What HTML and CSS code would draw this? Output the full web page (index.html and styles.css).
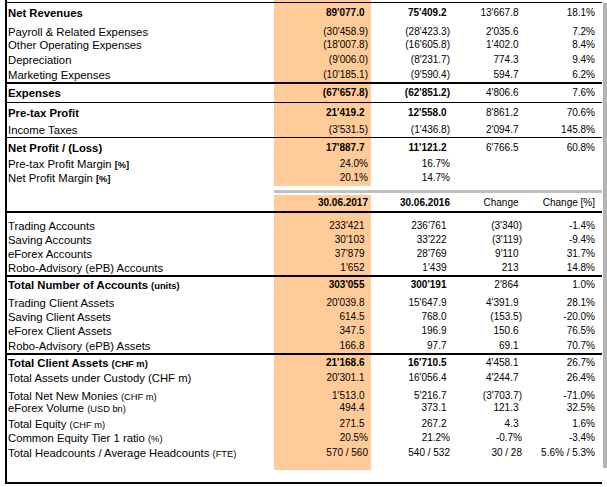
FILE: index.html
```html
<!DOCTYPE html>
<html>
<head>
<meta charset="utf-8">
<link rel="stylesheet" href="styles.css">
</head>
<body>
<div class="page">
  <div class="sheet">
    <div class="row cut"><div></div><div class="c1"></div><div></div><div></div><div></div><div></div></div>

    <div class="row h22 pt3 bold"><div class="lbl">Net Revenues</div><div class="c1 p">89'077.0</div><div class="c2 p">75'409.2</div><div class="c3 p nb">13'667.8</div><div class="c4 nb">18.1%</div><div></div></div>
    <div class="row h13"><div class="lbl">Payroll &amp; Related Expenses</div><div class="c1">(30'458.9)</div><div class="c2">(28'423.3)</div><div class="c3 p">2'035.6</div><div class="c4">7.2%</div><div></div></div>
    <div class="row h15"><div class="lbl">Other Operating Expenses</div><div class="c1">(18'007.8)</div><div class="c2">(16'605.8)</div><div class="c3 p">1'402.0</div><div class="c4">8.4%</div><div></div></div>
    <div class="row h15"><div class="lbl">Depreciation</div><div class="c1">(9'006.0)</div><div class="c2">(8'231.7)</div><div class="c3 p">774.3</div><div class="c4">9.4%</div><div></div></div>
    <div class="row h16 bb2"><div class="lbl">Marketing Expenses</div><div class="c1">(10'185.1)</div><div class="c2">(9'590.4)</div><div class="c3 p">594.7</div><div class="c4">6.2%</div><div></div></div>
    <div class="row h19 pt2 bb1 bold"><div class="lbl">Expenses</div><div class="c1">(67'657.8)</div><div class="c2">(62'851.2)</div><div class="c3 p nb">4'806.6</div><div class="c4 nb">7.6%</div><div></div></div>
    <div class="row h20 pt3 bold"><div class="lbl">Pre-tax Profit</div><div class="c1 p">21'419.2</div><div class="c2 p">12'558.0</div><div class="c3 p nb">8'861.2</div><div class="c4 nb">70.6%</div><div></div></div>
    <div class="row h15 bb1"><div class="lbl">Income Taxes</div><div class="c1">(3'531.5)</div><div class="c2">(1'436.8)</div><div class="c3 p">2'094.7</div><div class="c4">145.8%</div><div></div></div>
    <div class="row h19 pt3 bold"><div class="lbl">Net Profit / (Loss)</div><div class="c1 p">17'887.7</div><div class="c2 p">11'121.2</div><div class="c3 p nb">6'766.5</div><div class="c4 nb">60.8%</div><div></div></div>
    <div class="row h14"><div class="lbl">Pre-tax Profit Margin <span class="unit b">[%]</span></div><div class="c1">24.0%</div><div class="c2">16.7%</div><div class="c3"></div><div class="c4"></div><div></div></div>
    <div class="row h14"><div class="lbl">Net Profit Margin <span class="unit b">[%]</span></div><div class="c1">20.1%</div><div class="c2">14.7%</div><div class="c3"></div><div class="c4"></div><div></div></div>

    <div class="gap5"></div>
    <div class="band"></div>
    <div class="gap2"></div>

    <div class="row h18 pt1 bb2 bold"><div class="lbl"></div><div class="c1">30.06.2017</div><div class="c2">30.06.2016</div><div class="c3 p nb">Change</div><div class="c4 nb">Change [%]</div><div></div></div>
    <div class="row h20 pt6"><div class="lbl">Trading Accounts</div><div class="c1 p">233'421</div><div class="c2 p">236'761</div><div class="c3">(3'340)</div><div class="c4">-1.4%</div><div></div></div>
    <div class="row h14"><div class="lbl">Saving Accounts</div><div class="c1 p">30'103</div><div class="c2 p">33'222</div><div class="c3">(3'119)</div><div class="c4">-9.4%</div><div></div></div>
    <div class="row h14"><div class="lbl">eForex Accounts</div><div class="c1 p">37'879</div><div class="c2 p">28'769</div><div class="c3 p">9'110</div><div class="c4">31.7%</div><div></div></div>
    <div class="row h16 bb2"><div class="lbl">Robo-Advisory (ePB) Accounts</div><div class="c1 p">1'652</div><div class="c2 p">1'439</div><div class="c3 p">213</div><div class="c4">14.8%</div><div></div></div>
    <div class="row h19 pt1 bold"><div class="lbl">Total Number of Accounts <span class="unit">(units)</span></div><div class="c1 p">303'055</div><div class="c2 p">300'191</div><div class="c3 p nb">2'864</div><div class="c4 nb">1.0%</div><div></div></div>
    <div class="row h14"><div class="lbl">Trading Client Assets</div><div class="c1 p">20'039.8</div><div class="c2 p">15'647.9</div><div class="c3 p">4'391.9</div><div class="c4">28.1%</div><div></div></div>
    <div class="row h14"><div class="lbl">Saving Client Assets</div><div class="c1 p">614.5</div><div class="c2 p">768.0</div><div class="c3">(153.5)</div><div class="c4">-20.0%</div><div></div></div>
    <div class="row h15"><div class="lbl">eForex Client Assets</div><div class="c1 p">347.5</div><div class="c2 p">196.9</div><div class="c3 p">150.6</div><div class="c4">76.5%</div><div></div></div>
    <div class="row h16 bb2"><div class="lbl">Robo-Advisory (ePB) Assets</div><div class="c1 p">166.8</div><div class="c2 p">97.7</div><div class="c3 p">69.1</div><div class="c4">70.7%</div><div></div></div>
    <div class="row h16 pt1 bold"><div class="lbl">Total Client Assets <span class="unit">(CHF m)</span></div><div class="c1 p">21'168.6</div><div class="c2 p">16'710.5</div><div class="c3 p nb">4'458.1</div><div class="c4 nb">26.7%</div><div></div></div>
    <div class="row h18"><div class="lbl">Total Assets under Custody (CHF m)</div><div class="c1 p">20'301.1</div><div class="c2 p">16'056.4</div><div class="c3 p">4'244.7</div><div class="c4">26.4%</div><div></div></div>
    <div class="row h12"><div class="lbl">Total Net New Monies <span class="unit">(CHF m)</span></div><div class="c1 p">1'513.0</div><div class="c2 p">5'216.7</div><div class="c3">(3'703.7)</div><div class="c4">-71.0%</div><div></div></div>
    <div class="row h16"><div class="lbl">eForex Volume <span class="unit">(USD bn)</span></div><div class="c1 p">494.4</div><div class="c2 p">373.1</div><div class="c3 p">121.3</div><div class="c4">32.5%</div><div></div></div>
    <div class="row h14"><div class="lbl">Total Equity <span class="unit">(CHF m)</span></div><div class="c1 p">271.5</div><div class="c2 p">267.2</div><div class="c3 p">4.3</div><div class="c4">1.6%</div><div></div></div>
    <div class="row h15"><div class="lbl">Common Equity Tier 1 ratio <span class="unit">(%)</span></div><div class="c1">20.5%</div><div class="c2">21.2%</div><div class="c3">-0.7%</div><div class="c4">-3.4%</div><div></div></div>
    <div class="row h24"><div class="lbl">Total Headcounts / Average Headcounts <span class="unit">(FTE)</span></div><div class="c1">570 / 560</div><div class="c2">540 / 532</div><div class="c3">30 / 28</div><div class="c4">5.6% / 5.3%</div><div></div></div>
    <div class="row h14 bb2"><div class="lbl"></div><div></div><div></div><div></div><div></div><div></div></div>
  </div>
  <div class="shade"></div>
</div>
</body>
</html>
```

FILE: styles.css
```css
html, body {
  margin: 0;
  padding: 0;
  background: #ffffff;
}

body {
  font-family: "Liberation Sans", Arial, sans-serif;
  color: #000000;
}

.page {
  display: flex;
  align-items: flex-start;
  padding-left: 5px;
}

.sheet {
  width: 597px;
  box-sizing: border-box;
  border-left: 2px solid #000000;
}

.shade {
  width: 4px;
  height: 465px;
  margin-top: 3px;
  margin-left: 1px;
  background: #b3b3b3;
}

.row {
  display: grid;
  grid-template-columns: 267px 97px 81px 72px 73px 5px;
  box-sizing: border-box;
  line-height: 14px;
  white-space: nowrap;
}

.row > div {
  box-sizing: border-box;
}

.cut {
  height: 3px;
  border-bottom: 1px solid #000000;
}

.h12 { height: 12px; }
.h13 { height: 13px; }
.h14 { height: 14px; }
.h15 { height: 15px; }
.h16 { height: 16px; }
.h18 { height: 18px; }
.h19 { height: 19px; }
.h20 { height: 20px; }
.h22 { height: 22px; }
.h24 { height: 24px; }

.pt1 > div { padding-top: 1px; }
.pt2 > div { padding-top: 2px; }
.pt3 > div { padding-top: 3px; }
.pt6 > div { padding-top: 6px; }

.bb1 { border-bottom: 1px solid #000000; }
.bb2 { border-bottom: 2px solid #000000; }

.lbl {
  padding-left: 1px;
  font-size: 11.3px;
}

.unit {
  font-size: 9.3px;
}

.unit.b {
  font-weight: bold;
}

.c1, .c2, .c3, .c4 {
  text-align: right;
  font-size: 10px;
}

.c1 {
  background: #ffcc99;
  padding-right: 3px;
}

.c2, .c3, .c4 {
  padding-right: 2px;
}

.c1.p { padding-right: 6.5px; }
.c2.p, .c3.p { padding-right: 5.5px; }

.bold { font-weight: bold; }
.bold .nb { font-weight: normal; }

.gap5 { height: 5px; }
.gap2 { height: 2px; }

.band {
  height: 3px;
  margin-left: 267px;
  background: #c0c0c0;
}
```
